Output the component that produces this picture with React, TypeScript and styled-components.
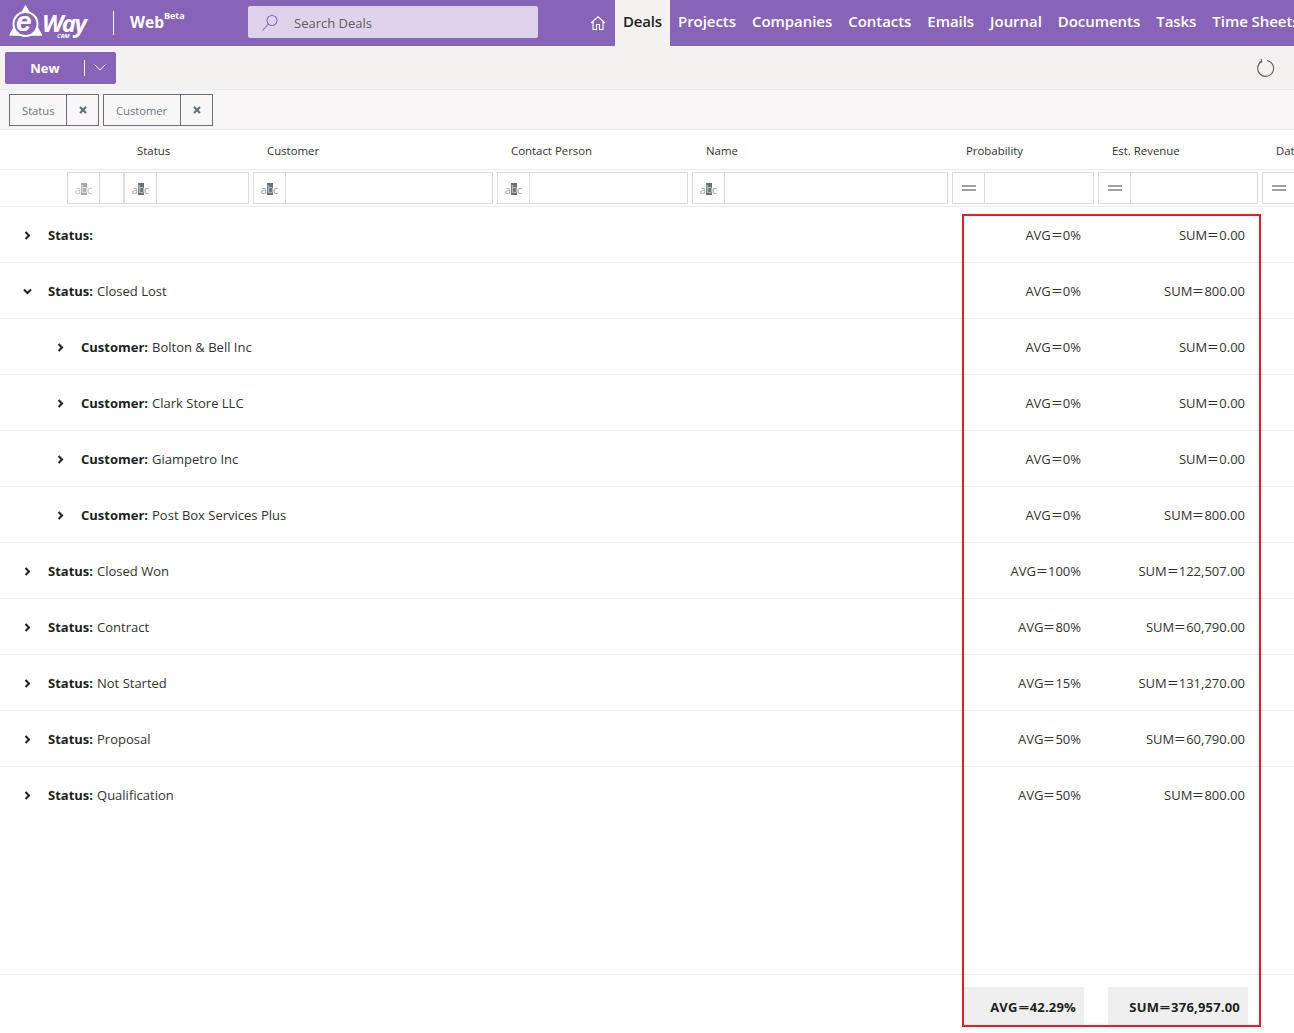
import React from "react";
import styled, { createGlobalStyle } from "styled-components";

const Global = createGlobalStyle`
  html, body { margin: 0; padding: 0; background: #fff; }
  body { font-family: "Open Sans", "Noto Sans", sans-serif; color: #323130; }
  * { box-sizing: border-box; }
`;
const COLUMNS = "67px 57px 129px 244px 195px 260px 146px 164px 200px";
const Page = styled.div`position: relative; width: 1294px; height: 1033px; overflow: hidden; display: flex; flex-direction: column; background: #fff;`;
const Header = styled.header`height: 46px; flex: none; background: #8764b8; display: flex; align-items: stretch; color: #fff; white-space: nowrap;`;
const Brand = styled.div`width: 248px; flex: none; display: flex; align-items: center; padding-left: 9px;`;
const LogoBox = styled.div`position: relative; width: 81px; height: 36px; flex: none;`;
const LogoE = styled.span`position: absolute; left: 7px; top: 3px; font: italic 700 28px/28px "Liberation Sans", sans-serif; color: #fff;`;
const LogoWay = styled.span`position: absolute; left: 33px; top: 3px; font: italic 700 24px/30px "Open Sans", sans-serif; letter-spacing: -1.6px; color: #fff;`;
const LogoCrm = styled.span`position: absolute; left: 48px; top: 28px; font: italic 700 6px/7px "Open Sans", sans-serif; color: #fff;`;
const BrandRule = styled.div`width: 1px; height: 24px; background: #fff; margin-left: 23px;`;
const Product = styled.div`margin-left: 16px; font-size: 15.5px; font-weight: 700; display: flex; line-height: 22px; margin-top: -2px;`;
const Sup = styled.sup`font-size: 9px; line-height: 10px; vertical-align: baseline; font-weight: 700; margin: 0;`;
const Search = styled.div`width: 290px; height: 32px; margin-top: 6px; flex: none; background: #dfd3ec; border-radius: 2px; display: flex; align-items: center; padding: 1px 0 0 13px; gap: 15px; font-size: 13px; color: #605e5c;`;
const Nav = styled.nav`margin-left: 52px; display: flex; align-items: stretch; flex: none;`;
const HomeLink = styled.div`width: 25px; display: flex; align-items: center; justify-content: flex-start;`;
const NavItem = styled.div<{ $active?: boolean }>`
  display: flex; align-items: center; font-size: 15px; font-weight: 600; letter-spacing: -0.05px; padding: 0 8px 4px;
  ${(p) => (p.$active ? "background:#f3f2f1;color:#201f1e;width:55px;letter-spacing:-0.2px;" : "color:#fff;")}
`;
const Toolbar = styled.div`height: 44px; flex: none; background: #f3f2f1; border-bottom: 1px solid #edebe9; display: flex; align-items: center; justify-content: space-between; padding: 0 19px 0 5px;`;
const NewButton = styled.div`width: 111px; height: 32px; background: #8764b8; border-radius: 2px; display: flex; align-items: center; color: #fff; font-size: 13px; font-weight: 700;`;
const NewLabel = styled.span`width: 79px; padding-left: 1px; text-align: center;`;
const NewRule = styled.span`width: 1px; height: 16px; background: #fff;`;
const NewChevron = styled.span`flex: 1; display: flex; justify-content: center; padding-right: 2px;`;
const ChipBar = styled.div`height: 40px; flex: none; background: #f8f6f6; border-bottom: 1px solid #edebe9; display: flex; align-items: flex-start; padding: 4px 0 0 9px; gap: 4px;`;
const Chip = styled.div<{ $width: number }>`width: ${(p) => p.$width}px; height: 32px; display: flex; border: 1px solid #69707a; background: #f8f6f6;`;
const ChipLabel = styled.span`flex: 1; padding: 0 0 0 12px; display: flex; align-items: center; font-size: 11.2px; color: #69797e; border-right: 1px solid #69707a;`;
const ChipClose = styled.span`width: 31px; display: flex; align-items: center; justify-content: center; padding-bottom: 1px;`;
const ColumnHeader = styled.div`height: 40px; flex: none; display: grid; grid-template-columns: ${COLUMNS}; align-items: center; border-bottom: 1px solid #edebe9; font-size: 11.4px; color: #323130; white-space: nowrap;`;
const ColumnLabel = styled.div<{ $inset?: number }>`padding-left: ${(p) => p.$inset ?? 14}px; padding-top: 1px;`;
const FilterRow = styled.div`height: 37px; flex: none; display: grid; grid-template-columns: ${COLUMNS}; border-bottom: 1px solid #edebe9; padding-top: 2px;`;
const FilterCell = styled.div<{ $flush?: boolean }>`
  height: 32px; margin-right: ${(p) => (p.$flush ? 0 : 4)}px; border: 1px solid #dcdcdc; display: flex; background: #fff;
`;
const FilterIcon = styled.div`width: 32px; flex: none; border-right: 1px solid #dcdcdc; display: flex; align-items: center; justify-content: center; padding-top: 2px;`;
const Abc = styled.span<{ $muted?: boolean }>`display: flex; align-items: center; font-size: 11px; color: ${(p) => (p.$muted ? "#c4c4c4" : "#a0a0a0")};`;
const AbcB = styled.b<{ $muted?: boolean }>`font-weight: 400; color: ${(p) => (p.$muted ? "#e8e8e8" : "#c8c8c8")}; background: ${(p) => (p.$muted ? "#a9a9a9" : "#69707a")}; height: 12px; line-height: 12px; width: 6px; text-align: center;`;
const Equals = styled.span`display: block; width: 14px; height: 6px; border-top: 2px solid #a0a0a0; border-bottom: 2px solid #a0a0a0; margin-bottom: 2px;`;
const Rows = styled.div`flex: 1; min-height: 0;`;
const Row = styled.div<{ $last?: boolean }>`height: 56px; display: grid; grid-template-columns: 952px 146px 164px; align-items: center; font-size: 13px; color: #323130; padding-top: 1px; white-space: nowrap; border-bottom: 1px solid ${(p) => (p.$last ? "transparent" : "#edebe9")};`;
const RowLabel = styled.div<{ $level: number }>`display: flex; align-items: center; padding-left: ${(p) => (p.$level ? 56 : 23)}px;`;
const Toggle = styled.span`width: 25px; flex: none; display: flex;`;
const Strong = styled.strong`font-weight: 700; color: #201f1e; margin-right: 4px;`;
const Value = styled.div`text-align: right; padding-right: 17px;`;
const Eq = styled.span`display: inline-block; width: 12px; text-align: center; transform: scaleX(1.45);`;
const Footer = styled.div`height: 59px; flex: none; border-top: 1px solid #edebe9; display: grid; grid-template-columns: 964px 120px 24px 140px; padding-top: 12px; align-items: start;`;
const Total = styled.div`height: 39px; background: #efefef; display: flex; align-items: center; justify-content: flex-end; padding-right: 8px; font-size: 13px; font-weight: 700; letter-spacing: 0.2px; color: #201f1e; white-space: pre;`;
const Annotation = styled.div`position: absolute; left: 962px; top: 214px; width: 299px; height: 813px; border: 2px solid #ed1c24; pointer-events: none;`;

const Chev = ({ open }: { open?: boolean }) => (
  <svg width="9" height="9" viewBox="0 0 9 9" fill="none" stroke="#201f1e" strokeWidth="2">
    {open ? <path d="M1 2.5 4.5 6 8 2.5" /> : <path d="M2.5 1 6 4.5 2.5 8" />}
  </svg>
);
const Cross = () => (
  <svg width="8" height="8" viewBox="0 0 8 8" stroke="#5f6b76" strokeWidth="2"><path d="M1 1 7 7M7 1 1 7" /></svg>
);
const AbcIcon = ({ muted }: { muted?: boolean }) => (
  <Abc $muted={muted}>a<AbcB $muted={muted}>b</AbcB>c</Abc>
);
const Formula = ({ name, value }: { name: string; value: string }) => (
  <>{name}<Eq>=</Eq>{value}</>
);

const rows: [number, string, string, string, string, string, string, boolean?][] = [
  [0, "Status:", "", "AVG", "0%", "SUM", "0.00"],
  [0, "Status:", "Closed Lost", "AVG", "0%", "SUM", "800.00", true],
  [1, "Customer:", "Bolton & Bell Inc", "AVG", "0%", "SUM", "0.00"],
  [1, "Customer:", "Clark Store LLC", "AVG", "0%", "SUM", "0.00"],
  [1, "Customer:", "Giampetro Inc", "AVG", "0%", "SUM", "0.00"],
  [1, "Customer:", "Post Box Services Plus", "AVG", "0%", "SUM", "800.00"],
  [0, "Status:", "Closed Won", "AVG", "100%", "SUM", "122,507.00"],
  [0, "Status:", "Contract", "AVG", "80%", "SUM", "60,790.00"],
  [0, "Status:", "Not Started", "AVG", "15%", "SUM", "131,270.00"],
  [0, "Status:", "Proposal", "AVG", "50%", "SUM", "60,790.00"],
  [0, "Status:", "Qualification", "AVG", "50%", "SUM", "800.00"],
];
const nav = ["Projects", "Companies", "Contacts", "Emails", "Journal", "Documents", "Tasks", "Time Sheets"];

export default function App() {
  return (
    <Page>
      <Global />
      <Header>
        <Brand>
          <LogoBox>
            <svg width="34" height="34" viewBox="0 0 34 34" fill="none">
              <path d="M16.5 1 L32.5 30 L1 30 Z" fill="#fff" stroke="#fff" strokeWidth="1.5" strokeLinejoin="round" />
              <circle cx="16.5" cy="19" r="12" fill="#8764b8" stroke="#fff" strokeWidth="2" />
            </svg>
            <LogoE>e</LogoE>
            <LogoWay>Way</LogoWay>
            <LogoCrm>CRM</LogoCrm>
          </LogoBox>
          <BrandRule />
          <Product>Web<Sup>Beta</Sup></Product>
        </Brand>
        <Search>
          <svg width="18" height="18" viewBox="0 0 18 18" fill="none" stroke="#8764b8" strokeWidth="1.1">
            <circle cx="11" cy="6.5" r="5" />
            <path d="M7.5 10 1.5 16.5" />
          </svg>
          Search Deals
        </Search>
        <Nav>
          <HomeLink>
            <svg width="16" height="16" viewBox="0 0 16 16" fill="none" stroke="#fff" strokeWidth="1.1">
              <path d="M1 8 8 1.8 15 8M3 6.5V14.5H6.5V9.5H9.5V14.5H13V6.5" />
            </svg>
          </HomeLink>
          <NavItem $active>Deals</NavItem>
          {nav.map((n) => <NavItem key={n}>{n}</NavItem>)}
        </Nav>
      </Header>
      <Toolbar>
        <NewButton>
          <NewLabel>New</NewLabel>
          <NewRule />
          <NewChevron>
            <svg width="12" height="7" viewBox="0 0 12 7" fill="none" stroke="#fff" strokeWidth="1"><path d="M.5.5 6 6 11.5.5" /></svg>
          </NewChevron>
        </NewButton>
        <svg width="20" height="20" viewBox="0 0 20 20" fill="none" stroke="#605e5c" strokeWidth="1.1">
          <path d="M6.5 3.5A8 8 0 1 0 12 2.5" />
          <path d="M6 .8 6.8 3.8 3.8 4.3" />
        </svg>
      </Toolbar>
      <ChipBar>
        <Chip $width={90}><ChipLabel>Status</ChipLabel><ChipClose><Cross /></ChipClose></Chip>
        <Chip $width={110}><ChipLabel>Customer</ChipLabel><ChipClose><Cross /></ChipClose></Chip>
      </ChipBar>
      <ColumnHeader>
        <span /><span />
        <ColumnLabel $inset={13}>Status</ColumnLabel>
        <ColumnLabel>Customer</ColumnLabel>
        <ColumnLabel>Contact Person</ColumnLabel>
        <ColumnLabel>Name</ColumnLabel>
        <ColumnLabel>Probability</ColumnLabel>
        <ColumnLabel>Est. Revenue</ColumnLabel>
        <ColumnLabel>Date</ColumnLabel>
      </ColumnHeader>
      <FilterRow>
        <span />
        <FilterCell $flush><FilterIcon><AbcIcon muted /></FilterIcon></FilterCell>
        {[0, 1, 2, 3].map((i) => <FilterCell key={i}><FilterIcon><AbcIcon /></FilterIcon></FilterCell>)}
        {[0, 1, 2].map((i) => <FilterCell key={i}><FilterIcon><Equals /></FilterIcon></FilterCell>)}
      </FilterRow>
      <Rows>
        {rows.map(([level, key, val, a, avg, s, sum, open], i) => (
          <Row key={i} $last={i === rows.length - 1}>
            <RowLabel $level={level}>
              <Toggle><Chev open={open} /></Toggle>
              <Strong>{key}</Strong>{val}
            </RowLabel>
            <Value><Formula name={a} value={avg} /></Value>
            <Value><Formula name={s} value={sum} /></Value>
          </Row>
        ))}
      </Rows>
      <Footer>
        <span />
        <Total><Formula name="AVG" value="42.29%" /></Total>
        <span />
        <Total><Formula name="SUM" value="376,957.00" /></Total>
      </Footer>
      <Annotation />
    </Page>
  );
}
